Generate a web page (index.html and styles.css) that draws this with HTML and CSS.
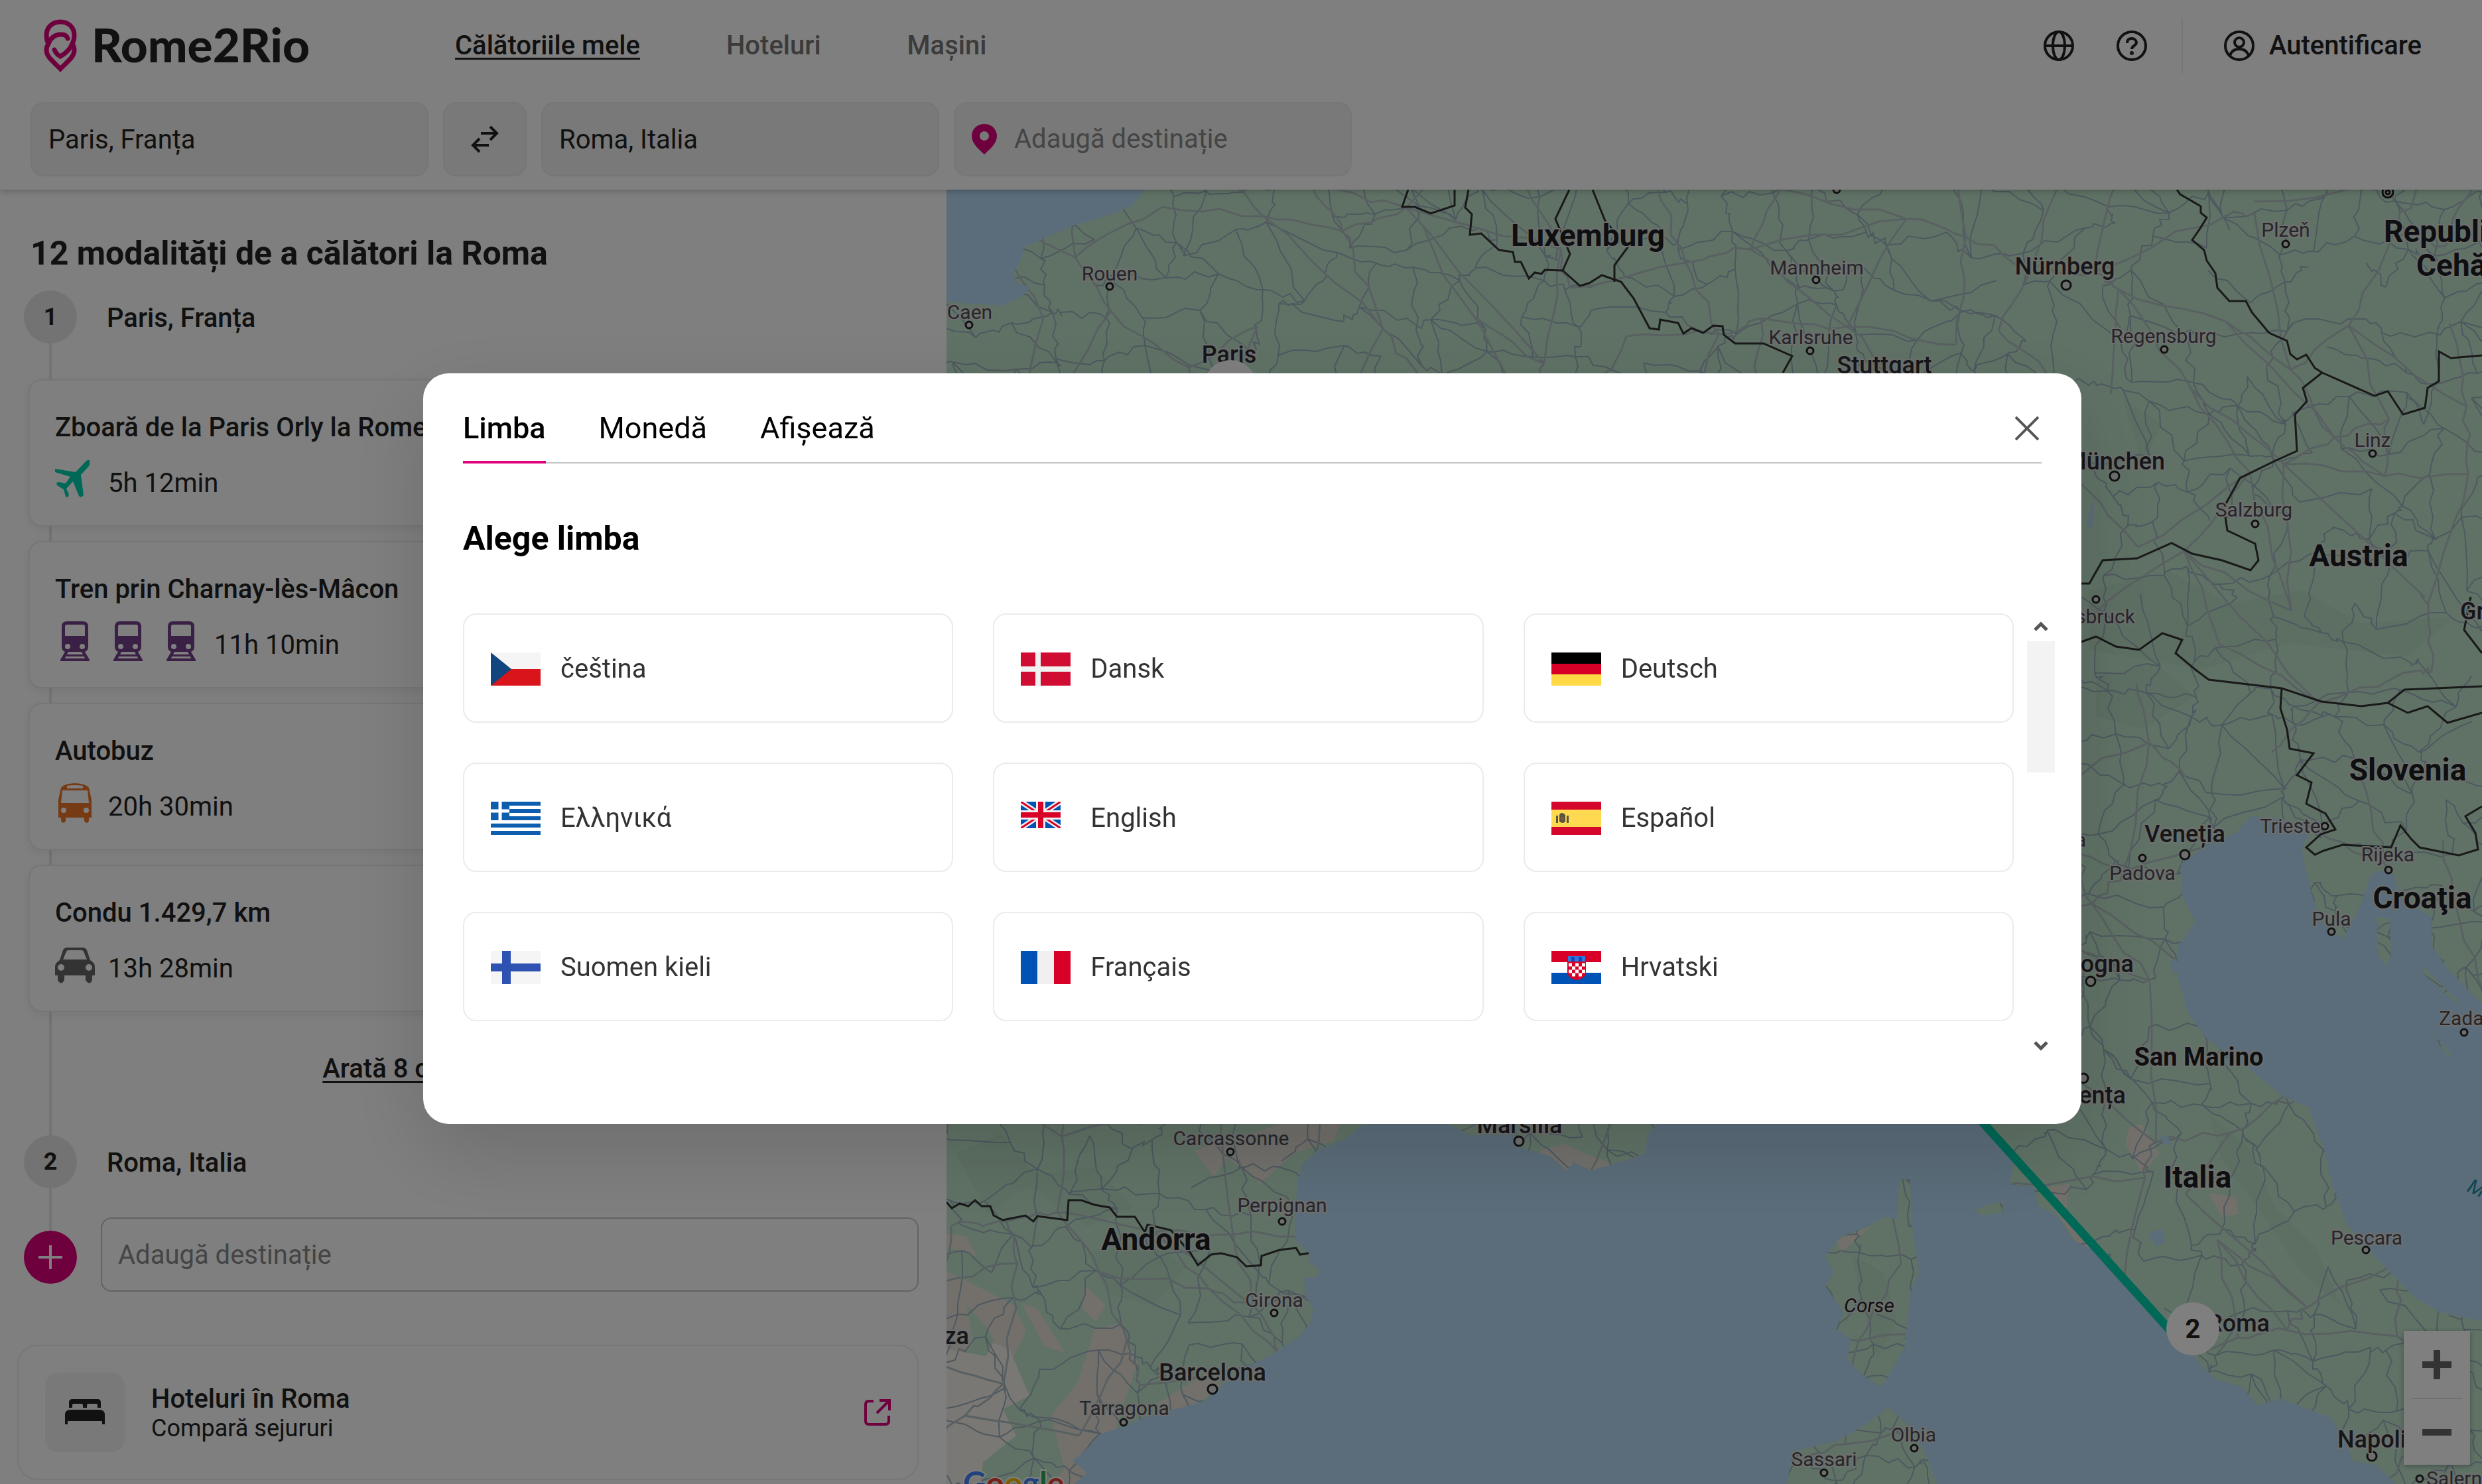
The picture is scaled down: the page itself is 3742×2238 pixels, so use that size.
FILE: index.html
```html
<!DOCTYPE html>
<html lang="ro">
<head>
    <meta charset="UTF-8">
    <meta name="viewport" content="width=device-width, initial-scale=1">
    <title>Paris - Roma | Rome2Rio</title>
    <link rel="stylesheet" href="styles.css">
</head>
<body>
<header class="header">
    <div class="topbar">
        <a class="logo" href="#">
            <svg class="logo-pin" viewBox="0 0 50 80" fill="none" stroke="#df007c" stroke-width="7">
                <path d="M25 4C13 4 4 12 4 24c0 5 1 9 3 13-2 3-3 6-3 10 0 10 11 17 21 28 10-11 21-18 21-28 0-4-1-7-3-10 2-4 3-8 3-13C46 12 37 4 25 4z"/>
                <path d="M7 37c3-9 10-14 19-14 5 0 9 2 10 6" stroke-linecap="round"/>
                <path d="M43 37C39 47 32 52 25 56c-4-2-7-5-9-10" stroke-linecap="round"/>
            </svg>
            <span>Rome2Rio</span>
        </a>
        <nav class="nav">
            <a class="active" href="#">Călătoriile mele</a>
            <a href="#">Hoteluri</a>
            <a href="#">Mașini</a>
        </nav>
        <div class="tools">
            <button class="tool" aria-label="Limba">
                <svg viewBox="0 0 46 46" fill="none" stroke="#222" stroke-width="4"><circle cx="23" cy="23" r="21"/><ellipse cx="23" cy="23" rx="9" ry="21"/><path d="M2 23h42"/></svg>
            </button>
            <button class="tool" aria-label="Ajutor">
                <svg viewBox="0 0 46 46" fill="none" stroke="#222" stroke-width="4"><circle cx="23" cy="23" r="21"/><path d="M16 19c0-5 3-7 7-7s7 3 7 6c0 5-7 5-7 10"/><circle cx="23" cy="34" r="1" fill="#222"/></svg>
            </button>
            <button class="login">
                <svg viewBox="0 0 46 46" fill="none" stroke="#222" stroke-width="4"><circle cx="23" cy="23" r="21"/><circle cx="23" cy="18" r="7"/><path d="M9 38c2-7 7-10 14-10s12 3 14 10"/></svg>
                <span>Autentificare</span>
            </button>
        </div>
    </div>
    <form class="search">
        <input class="field" type="text" value="Paris, Franța" aria-label="Origine">
        <button class="swap" type="button" aria-label="Inversează">
            <svg viewBox="0 0 42 42" fill="none" stroke="#222" stroke-width="4"><path d="M15 12h24M29 2l10 10-10 10M27 30H3M13 20L3 30l10 10"/></svg>
        </button>
        <input class="field" type="text" value="Roma, Italia" aria-label="Destinație">
        <label class="field field-add">
            <svg viewBox="0 0 38 46"><path fill="#df007c" fill-rule="evenodd" d="M19 0C8 0 0 8 0 18c0 12 12 21 19 28 7-7 19-16 19-28C38 8 30 0 19 0zm0 11a7 7 0 1 1 0 14 7 7 0 0 1 0-14z"/></svg>
            <input type="text" placeholder="Adaugă destinație">
        </label>
    </form>
</header>

<main class="main">
    <section class="panel">
        <h1>12 modalități de a călători la Roma</h1>
        <div class="timeline">
            <div class="stop"><span class="dot">1</span><span class="place">Paris, Franța</span></div>
            <div class="routes">
                <a class="route" href="#">
                    <span class="route-title">Zboară de la Paris Orly la Rome Fiumicino</span>
                    <span class="route-row">
                        <svg viewBox="0 0 60 60" fill="#00d0ae"><path d="M0 14l31 5L46 3c3-3 7-3 6 0 1 3 0 5-1 7L39 23l4 31-4 3-3-2-9-22-10 11 4 9-2 4-3-1-3-11-10-6-1-4 4-1 10 2 7-10L0 19z"/></svg>
                        5h 12min
                    </span>
                </a>
                <a class="route" href="#">
                    <span class="route-title">Tren prin Charnay-lès-Mâcon</span>
                    <span class="route-row">
                        <svg viewBox="0 0 60 60"><use href="#train"/></svg>
                        <svg viewBox="0 0 60 60"><use href="#train"/></svg>
                        <svg viewBox="0 0 60 60"><use href="#train"/></svg>
                        11h 10min
                    </span>
                </a>
                <a class="route" href="#">
                    <span class="route-title">Autobuz</span>
                    <span class="route-row">
                        <svg viewBox="0 0 60 60" fill="#ec7428"><path fill-rule="evenodd" d="M9 7c6-9 36-9 42 0l4 18v27h-4v5q-3 6-7 0v-5H16v5q-3 6-7 0v-5H5V25zm9-3v4h24V4q-12-2-24 0zm-7 7L9 30h42l-2-19zm2 26a4 4 0 1 0 0 8 4 4 0 0 0 0-8zm34 0a4 4 0 1 0 0 8 4 4 0 0 0 0-8z"/></svg>
                        20h 30min
                    </span>
                </a>
                <a class="route" href="#">
                    <span class="route-title">Condu 1.429,7 km</span>
                    <span class="route-row">
                        <svg viewBox="0 0 60 60" fill="#666"><path fill-rule="evenodd" d="M7 23l5-15q2-4 6-4h24q4 0 6 4l5 15q7 4 7 10v13h-4v7q-4 9-10 0v-7H14v7q-5 9-10 0v-7H0V33q0-6 7-10zm5-1h36l-5-12q-1-2-3-2H20q-2 0-3 2zm-3 7a5 5 0 1 0 0 10 5 5 0 0 0 0-10zm42 0a5 5 0 1 0 0 10 5 5 0 0 0 0-10z"/></svg>
                        13h 28min
                    </span>
                </a>
            </div>
            <a class="more" href="#">Arată 8 opțiuni adiționale</a>
            <div class="stop"><span class="dot">2</span><span class="place">Roma, Italia</span></div>
            <div class="add">
                <button class="dot dot-add" aria-label="Adaugă">
                    <svg viewBox="0 0 36 36" stroke="#fff" stroke-width="4"><path d="M18 0v36M0 18h36"/></svg>
                </button>
                <input type="text" placeholder="Adaugă destinație" aria-label="Adaugă destinație">
            </div>
        </div>
        <a class="hotel" href="#">
            <span class="hotel-icon">
                <svg viewBox="0 0 60 40" fill="#222"><path d="M6 13V5q0-5 5-5h38q5 0 5 5v8h-5V9q0-2-2-2H35q-2 0-2 3v3h-6v-3q0-3-2-3H13q-2 0-2 2v4zM0 38V24q0-8 8-8h44q8 0 8 8v14h-4v-5H4v5z"/></svg>
            </span>
            <span class="hotel-text">
                <strong>Hoteluri în Roma</strong>
                <span>Compară sejururi</span>
            </span>
            <svg class="external" viewBox="0 0 40 40" fill="none" stroke="#df007c" stroke-width="4"><path d="M14 3H7Q2 3 2 8v25q0 5 5 5h25q5 0 5-5v-8M23 2h15v15M38 2L19 21"/></svg>
        </a>
    </section>

    <section class="map">
        <svg class="map-canvas" viewBox="1427 286 2315 1952" preserveAspectRatio="xMinYMin slice">
            <defs>
                <g id="train" fill="#744088"><path fill-rule="evenodd" d="M18 0h24q8 0 8 8v30q0 6-5 8l7 12v2H8v-2l7-12q-5-2-5-8V8q0-8 8-8zm0 5q-3 0-3 3v14h30V8q0-3-3-3zm1 29a4 4 0 1 0 0 8 4 4 0 0 0 0-8zm22 0a4 4 0 1 0 0 8 4 4 0 0 0 0-8zM20 46l-2 4h24l-2-4zm-4 7l-1 3h30l-1-3z"/></g>
                <path id="land" d="M1726 286L1707 310 1669 325 1616 341 1568 362 1544 372 1540 390 1527 413 1533 427 1554 433 1540 447 1511 461 1468 458 1426 455V2238H1619L1639 2221 1617 2203 1642 2182 1657 2164 1688 2153 1741 2132 1780 2123 1818 2112 1833 2096 1879 2061 1910 2047 1956 2018 1975 1997 1980 1975 1968 1954 1966 1927 1986 1926 1990 1915 1973 1904 1973 1890 1953 1869 1953 1822 1956 1783 1963 1757 1986 1735 2025 1719 2055 1696 2174 1690 2216 1712 2285 1712 2296 1732 2338 1744 2361 1765 2373 1753 2400 1765 2434 1755 2480 1740 2484 1712 2503 1690H2985L3019 1717 3040 1739 3030 1786 3066 1790 3073 1819 3102 1833 3124 1869 3161 1888 3193 1913 3222 1964 3266 2000 3306 2044 3339 2080 3379 2091 3404 2120 3437 2109 3474 2123 3514 2138 3539 2174 3546 2203 3583 2210 3612 2238H3742V1993L3677 1978 3641 1956 3583 1898 3539 1848 3517 1790 3503 1731 3481 1670 3444 1655 3386 1608 3328 1568 3299 1528 3284 1477 3284 1427 3310 1390 3288 1347 3288 1303 3328 1274 3372 1256 3393 1231 3437 1234 3485 1249 3470 1281 3485 1347 3499 1390 3532 1416 3554 1376 3576 1318 3605 1310 3619 1354 3666 1383 3666 1427 3692 1463 3742 1514V286z
                    M2880 1778L2882 1840 2893 1920 2880 1950 2872 2030 2850 2070 2837 2092 2810 2075 2785 2050 2790 2020 2768 2003 2780 1980 2752 1940 2765 1920 2752 1895 2775 1865 2815 1850 2840 1835 2860 1838 2862 1800 2865 1778z
                    M2847 2122L2818 2145 2767 2174 2702 2189 2695 2238H2920L2902 2189 2880 2152z
                    M2975 1826L3000 1816 3020 1813 3019 1830 2990 1832z
                    M3583 1383L3603 1385 3605 1440 3597 1458 3586 1440z M3650 1455L3712 1515 3700 1510 3655 1470z M3660 1550L3700 1595 3690 1592z"/>
                <clipPath id="landClip"><use href="#land"/></clipPath>
            </defs>
            <rect x="1427" y="286" width="2315" height="1952" fill="#b6d9f5"/>
            <use href="#land" fill="#c1e5cc"/>
            <g clip-path="url(#landClip)">
                <g fill="#e6e1d8">
                    <path d="M1427 1917l40 20 60 30 20 40-30 60-25-60-35-40 10 60-40 40zM1427 1860l30 5 15 30-45-15z"/>
                    <path d="M1650 2005l40-10 25 60-30 90-30 110-60 60-50-30 60-70-20-80 40-50zM1540 1965l25 10 40 65-30-10zM1635 1938l32 30-15 25-20-20z"/>
                    <path d="M1800 1735l100-30 60-20 70-10-20 45-60 20-50 45-50-40-20 30z"/>
                    <path d="M2320 1735l40-10 30 15 40 15-30 20h-60zM1740 2120l80-50 20 20-50 40z"/>
                    <path d="M3210 1700l20-5 25 45-25 30-25-45zM3090 1790l30-5-5 40 50 70-30-15-40-60zM3330 1800l40 5 5 25-25 5zM2770 1870l50-20-45 40zM3210 950l30-10 20 15-30 15z"/>
                </g>
                <path fill="#f4f0e8" d="M1427 2035l60 10 10-20 25 10 30 70-40 20 20 40-50 40-10 80-45 20z"/>
                <g fill="#bbdec6">
                    <path d="M1440 1740l70-30 50 60 90-10 60 60-70 30-90-60-60 40zM1640 1890l90-20 60 40-50 60-70-20zM3150 890l120-30 90 50 110-20 90 50 140-10-70 60-180-20-130 40-170-30zM3160 1020l90-20 60 50-80 50-70-20zM3200 600l60 40-30 60zM3330 1680l60 50 40 90 60 60 40 90-60-50-60-90-60-80zM2790 1890l50 30 20 70-30 60-20-80z"/>
                </g>
                <g id="roads" class="roads"></g>
                <g id="highways" class="highways"></g>
            </g>
            <g class="lakes">
                <path d="M3240 1860l20-8 4 22-14 6zM3256 1712l12 2 8 14-14-4zM3270 1450l10-4 10 16-12 8zM3146 790l8-30 4-4-4 44z"/>
            </g>
            <g class="borders">
                <path d="M2123 286L2114 312 2133 312 2157 322 2193 310V286"/>
                <path d="M2214 286L2209 313 2219 323 2216 354 2233 352 2260 377 2281 380 2284 395 2293 395 2305 420 2314 411 2324 413 2329 407 2356 408 2382 431 2396 427 2415 415 2444 425 2463 450 2487 495 2501 497 2503 482 2530 487 2538 503 2550 495 2568 502 2583 491 2597 492 2599 505 2616 518 2659 518 2702 537 2688 562"/>
                <path d="M2366 286L2345 330 2367 383 2356 408M2401 286L2420 333 2454 373 2434 400V425"/>
                <path d="M3282 286L3287 293 3318 311V321L3327 328 3318 343 3305 362 3323 377 3327 393 3340 412 3343 434 3361 454H3386L3395 471 3421 502 3448 514 3453 534 3463 542 3477 535 3490 555 3501 562 3580 597 3600 590 3623 625 3656 615 3660 585 3677 575V530L3695 540 3742 536"/>
                <path d="M3501 562L3472 585 3478 605 3460 625 3463 680 3430 695 3377 721 3353 765 3358 800 3400 820 3405 845 3393 860 3350 845 3305 835 3274 819 3222 842 3170 845 3150 880 3138 880"/>
                <path d="M3138 968L3160 960 3190 975 3225 980 3260 955 3290 965 3280 985 3310 1010 3330 1025 3440 1038 3500 1058 3560 1065 3600 1060 3625 1040 3742 1035"/>
                <path d="M3440 1038L3438 1068 3448 1100 3452 1129 3488 1136 3463 1169 3485 1180 3477 1212 3506 1227 3521 1251 3499 1258 3477 1278 3490 1289 3503 1283 3532 1274 3605 1278 3619 1245 3635 1265 3648 1278 3707 1290 3736 1281 3732 1256 3717 1231 3742 1216"/>
                <path d="M3600 1060L3630 1075 3660 1065 3690 1090 3742 1075M3725 900L3715 950 3742 985"/>
                <path d="M1427 1813L1435 1822 1447 1815 1460 1819 1470 1810 1480 1819 1493 1819 1498 1833 1512 1840 1546 1833 1558 1842 1564 1834 1609 1840 1611 1810 1630 1810 1650 1817 1673 1821 1684 1835H1711L1726 1858 1730 1847 1765 1855 1795 1890 1806 1908 1826 1892 1841 1890 1865 1896 1879 1910 1901 1908 1902 1894 1929 1885 1954 1882 1960 1892 1973 1890"/>
            </g>
            <path d="M2976 1678L3276 2011" stroke="#00d0ac" stroke-width="13"/>
            <g class="towns">
                <circle cx="1673" cy="432" r="5"/><circle cx="1461" cy="490" r="5"/><circle cx="2738" cy="422" r="5"/><circle cx="2729" cy="529" r="5"/>
                <circle cx="3446" cy="368" r="5"/><circle cx="3263" cy="527" r="5"/><circle cx="3577" cy="684" r="5"/><circle cx="3400" cy="790" r="5"/>
                <circle cx="3160" cy="904" r="5"/><circle cx="3505" cy="1246" r="5"/><circle cx="3230" cy="1294" r="5"/><circle cx="3601" cy="1312" r="5"/>
                <circle cx="3515" cy="1405" r="5"/><circle cx="3715" cy="1557" r="5"/><circle cx="3567" cy="1885" r="5"/><circle cx="2886" cy="2184" r="5"/>
                <circle cx="2750" cy="2221" r="5"/><circle cx="3648" cy="2230" r="5"/><circle cx="1855" cy="1737" r="5"/><circle cx="1933" cy="1842" r="5"/>
                <circle cx="1921" cy="1980" r="5"/><circle cx="1694" cy="2145" r="5"/>
                <circle cx="3115" cy="430" r="7"/><circle cx="3188" cy="718" r="7"/><circle cx="3294" cy="1289" r="7"/><circle cx="3152" cy="1480" r="7"/>
                <circle cx="3141" cy="1626" r="7"/><circle cx="3576" cy="2196" r="7"/><circle cx="2290" cy="1721" r="7"/><circle cx="1828" cy="2095" r="7"/>
                <circle cx="3600" cy="290" r="8"/><circle cx="3600" cy="290" r="3"/><circle cx="2769" cy="286" r="5"/>
            </g>
            <g class="labels small">
                <text x="1673" y="423">Rouen</text>
                <text x="1462" y="481">Caen</text>
                <text x="2739" y="414">Mannheim</text>
                <text x="2730" y="519">Karlsruhe</text>
                <text x="3446" y="357">Plzeň</text>
                <text x="3262" y="517">Regensburg</text>
                <text x="3577" y="674">Linz</text>
                <text x="3398" y="779">Salzburg</text>
                <text class="end" x="3219" y="940">Innsbruck</text>
                <text x="3453" y="1256">Trieste</text>
                <text x="3230" y="1327">Padova</text>
                <text x="3600" y="1299">Rijeka</text>
                <text x="3515" y="1396">Pula</text>
                <text class="start" x="3677" y="1546">Zadar</text>
                <text x="3568" y="1877">Pescara</text>
                <text class="island" x="2818" y="1979">Corse</text>
                <text x="2885" y="2174">Olbia</text>
                <text x="2750" y="2211">Sassari</text>
                <text class="start" x="3658" y="2240">Salerno</text>
                <text class="end" x="3145" y="1277">Verona</text>
                <text x="1856" y="1727">Carcassonne</text>
                <text x="1933" y="1828">Perpignan</text>
                <text x="1921" y="1971">Girona</text>
                <text x="1695" y="2134">Tarragona</text>
            </g>
            <g class="labels city">
                <text x="1853" y="547">Paris</text>
                <text x="2841" y="563">Stuttgart</text>
                <text x="3113" y="414">Nürnberg</text>
                <text class="end" x="3264" y="708">München</text>
                <text class="start" x="3709" y="934">Graz</text>
                <text x="3294" y="1270">Veneția</text>
                <text class="end" x="3217" y="1466">Bologna</text>
                <text class="end" x="3205" y="1664">Florența</text>
                <text class="end" x="3422" y="2008">Roma</text>
                <text class="start" x="3524" y="2183">Napoli</text>
                <text x="2291" y="1709">Marsilia</text>
                <text class="end" x="1461" y="2027">Zaragoza</text>
                <text x="1828" y="2082">Barcelona</text>
            </g>
            <g class="labels country">
                <text x="2394" y="371">Luxemburg</text>
                <text class="start" x="3594" y="365">Republica</text>
                <text class="start" x="3643" y="416">Cehă</text>
                <text x="3556" y="854">Austria</text>
                <text x="3630" y="1177">Slovenia</text>
                <text x="3652" y="1370">Croaţia</text>
                <text x="3313" y="1791">Italia</text>
                <text x="1743" y="1885">Andorra</text>
                <text class="minor" x="3315" y="1607">San Marino</text>
            </g>
            <text class="sea" x="3718" y="1796" transform="rotate(25 3718 1796)">Marea Adriatică</text>
            <g class="pins">
                <circle cx="1855" cy="583" r="40"/>
                <circle cx="3306" cy="2004" r="40"/>
                <text x="3306" y="2018">2</text>
            </g>
            <text class="google" x="1452" y="2254"><tspan fill="#4285f4">G</tspan><tspan fill="#ea4335">o</tspan><tspan fill="#fbbc05">o</tspan><tspan fill="#4285f4">g</tspan><tspan fill="#34a853">l</tspan><tspan fill="#ea4335">e</tspan></text>
        </svg>
        <div class="zoom">
            <button aria-label="Mărește"><svg viewBox="0 0 44 44" stroke="#666" stroke-width="10"><path d="M22 0v44M0 22h44"/></svg></button>
            <button aria-label="Micșorează"><svg viewBox="0 0 44 44" stroke="#666" stroke-width="10"><path d="M0 22h44"/></svg></button>
        </div>
    </section>
</main>

<div class="overlay">
    <div class="modal" role="dialog" aria-label="Limba">
        <div class="tabs">
            <button class="tab selected">Limba</button>
            <button class="tab">Monedă</button>
            <button class="tab">Afișează</button>
            <button class="close" aria-label="Închide">
                <svg viewBox="0 0 36 36" stroke="#555" stroke-width="4"><path d="M1 1l34 34M35 1L1 35"/></svg>
            </button>
        </div>
        <h2>Alege limba</h2>
        <div class="languages">
            <div class="grid">
                <button class="language">
                    <svg viewBox="0 0 75 50"><path fill="#f5f5f5" d="M0 0h75v25H0z"/><path fill="#d9141a" d="M0 25h75v25H0z"/><path fill="#11457e" d="M0 0l31 25L0 50z"/></svg>
                    čeština
                </button>
                <button class="language">
                    <svg viewBox="0 0 75 50"><path fill="#d00c33" d="M0 0h75v50H0z"/><path fill="#f0f0f0" d="M22 0h8v50h-8zM0 21h75v8H0z"/></svg>
                    Dansk
                </button>
                <button class="language">
                    <svg viewBox="0 0 75 50"><path d="M0 0h75v17H0z"/><path fill="#d80027" d="M0 17h75v17H0z"/><path fill="#ffda44" d="M0 33h75v17H0z"/></svg>
                    Deutsch
                </button>
                <button class="language">
                    <svg viewBox="0 0 75 50"><path fill="#fff" d="M0 0h75v50H0z"/><path stroke="#0d5eaf" stroke-width="6" d="M0 3h75M0 14h75M0 25h75M0 36h75M0 47h75"/><path fill="#0d5eaf" d="M0 0h28v28H0z"/><path stroke="#fff" stroke-width="5" d="M14 0v28M0 14h28"/></svg>
                    Ελληνικά
                </button>
                <button class="language">
                    <svg viewBox="0 0 75 50"><path fill="#0052b4" d="M0 0h60v40H0z"/><path stroke="#f0f0f0" stroke-width="8" d="M0 0l60 40M60 0L0 40"/><path stroke="#d80027" stroke-width="3" d="M0 0l60 40M60 0L0 40"/><path stroke="#f0f0f0" stroke-width="14" d="M30 0v40M0 20h60"/><path stroke="#d80027" stroke-width="8" d="M30 0v40M0 20h60"/><path fill="#fff" d="M60 0h15v50H0V40h60z"/></svg>
                    English
                </button>
                <button class="language">
                    <svg viewBox="0 0 75 50"><path fill="#d6072c" d="M0 0h75v50H0z"/><path fill="#ffda50" d="M0 12h75v26H0z"/><path fill="#5a5540" d="M7 21h3v11H7zM23 21h3v11h-3zM12 20q1-3 4-3t5 3v10q-4 4-9 0z"/><path fill="#8a5a40" d="M15 23h3v5h-3z"/></svg>
                    Español
                </button>
                <button class="language">
                    <svg viewBox="0 0 75 50"><path fill="#f5f5f5" d="M0 0h75v50H0z"/><path fill="#2e52b2" d="M17 0h13v50H17zM0 19h75v12H0z"/></svg>
                    Suomen kieli
                </button>
                <button class="language">
                    <svg viewBox="0 0 75 50"><path fill="#0052b4" d="M0 0h25v50H0z"/><path fill="#f0f0f0" d="M25 0h25v50H25z"/><path fill="#d80027" d="M50 0h25v50H50z"/></svg>
                    Français
                </button>
                <button class="language">
                    <svg viewBox="0 0 75 50"><path fill="#fff" d="M0 0h75v50H0z"/><path fill="#d80027" d="M0 0h75v17H0z"/><path fill="#0052b4" d="M0 33h75v17H0z"/><path fill="#d80027" d="M24 16h28v18q-2 8-14 10-12-2-14-10z"/><path fill="#2b7be0" d="M25 8h26v8H25z"/><path fill="#1a47b8" d="M30 9h5v7h-5zM41 9h5v7h-5z"/><path stroke="#fff" stroke-width="5" stroke-dasharray="5 5" d="M26 21h25M26 31h25"/><path stroke="#fff" stroke-width="5" stroke-dasharray="5 5" d="M31 26h16M31 36h15"/></svg>
                    Hrvatski
                </button>
            </div>
            <div class="scrollbar">
                <svg viewBox="0 0 22 16"><path d="M2 13l9-9 9 9" fill="none" stroke="#555" stroke-width="5"/></svg>
                <span class="thumb"></span>
                <svg class="down" viewBox="0 0 22 16"><path d="M2 3l9 9 9-9" fill="none" stroke="#555" stroke-width="5"/></svg>
            </div>
        </div>
    </div>
</div>

<script src="script.js"></script>
</body>
</html>
```

FILE: styles.css
```css
* {
    box-sizing: border-box;
}
body {
    margin: 0;
    height: 100vh;
    overflow: hidden;
    display: flex;
    flex-direction: column;
    font-family: Roboto, "Liberation Sans", sans-serif;
    font-size: 40px;
    line-height: 48px;
    color: #222;
    background: #fff;
}
a {
    color: inherit;
    text-decoration: none;
}
button, input {
    font: inherit;
    color: inherit;
}
button {
    padding: 0;
    border: 0;
    background: none;
}
h1, h2 {
    margin: 0;
    font-size: 50px;
    line-height: 60px;
    font-weight: 700;
}
svg {
    display: block;
}
::placeholder {
    color: #8a8a8a;
    opacity: 1;
}

/* header */
.header {
    position: relative;
    z-index: 1;
    background: #fff;
    padding-bottom: 20px;
    box-shadow: 0 2px 10px rgba(0, 0, 0, .25);
}
.topbar {
    display: flex;
    align-items: center;
    height: 138px;
    padding: 0 91px 0 66px;
}
.logo {
    display: flex;
    align-items: center;
    gap: 22px;
    width: 620px;
    font-family: Lato, sans-serif;
    font-size: 71px;
    line-height: 80px;
    font-weight: 900;
}
.logo span {
    padding-bottom: 4px;
}
.logo-pin {
    width: 50px;
    height: 80px;
}
.nav {
    display: flex;
    gap: 130px;
    font-weight: 500;
    color: #777;
}
.nav .active {
    color: #222;
    text-decoration: underline;
    text-decoration-thickness: 3px;
    text-underline-offset: 5px;
}
.tools {
    display: flex;
    align-items: center;
    gap: 64px;
    margin-left: auto;
}
.tools svg {
    width: 46px;
    height: 46px;
}
.login {
    display: flex;
    align-items: center;
    gap: 22px;
    height: 84px;
    margin-left: -12px;
    padding-left: 62px;
    border-left: 2px solid #ececec;
    font-weight: 500;
}
.search {
    display: flex;
    gap: 22px;
    padding: 0 46px;
    margin-top: 16px;
}
.field, .swap {
    height: 112px;
    border: 2px solid #ececec;
    border-radius: 20px;
    background: #f2f2f2;
}
.field {
    flex: 0 1 600px;
    min-width: 0;
    padding: 0 25px;
}
.field-add {
    display: flex;
    align-items: center;
    gap: 26px;
}
.field-add svg {
    width: 38px;
    height: 46px;
}
.field-add input {
    min-width: 0;
    flex: 1;
    padding: 0;
    border: 0;
    background: none;
}
.swap {
    display: grid;
    place-items: center;
    flex: 0 0 126px;
}
.swap svg {
    width: 42px;
    height: 42px;
}

/* routes */
.main {
    flex: 1;
    min-height: 0;
    display: flex;
}
.panel {
    flex: 0 1 1427px;
    padding: 66px 42px 0 26px;
}
.panel h1 {
    padding-left: 20px;
}
.timeline {
    position: relative;
    display: flex;
    flex-direction: column;
    margin-top: 26px;
    padding-left: 10px;
}
.timeline::before {
    content: "";
    position: absolute;
    left: 48px;
    top: 40px;
    bottom: 40px;
    width: 4px;
    background: #e6e6e6;
}
.stop {
    position: relative;
    display: flex;
    align-items: center;
    gap: 45px;
    font-weight: 500;
}
.place {
    padding-top: 4px;
}
.dot {
    display: grid;
    place-items: center;
    flex: none;
    width: 80px;
    height: 80px;
    border-radius: 50%;
    background: #e6e6e6;
    font-size: 36px;
    font-weight: 700;
}
.dot-add {
    position: relative;
    margin-top: 8px;
    background: #df007c;
}
.dot-add svg {
    width: 36px;
    height: 36px;
}
.routes {
    position: relative;
    display: grid;
    gap: 22px;
    margin: 54px 0 62px 7px;
}
.route {
    display: flex;
    flex-direction: column;
    gap: 25px;
    height: 222px;
    padding: 47px 38px 0;
    border: 2px solid #ececec;
    border-radius: 20px;
    background: #fff;
    box-shadow: 0 4px 16px rgba(0, 0, 0, .08);
}
.route-title {
    font-weight: 500;
}
.route-row {
    display: flex;
    align-items: flex-end;
    gap: 20px;
    height: 59px;
}
.route-row svg {
    width: 60px;
    height: 60px;
}
.more {
    align-self: center;
    margin-bottom: 76px;
    font-weight: 500;
    text-decoration: underline;
    text-decoration-thickness: 3px;
    text-underline-offset: 5px;
}
.add {
    display: flex;
    align-items: center;
    gap: 36px;
    margin-top: 44px;
}
.add input {
    flex: 1;
    min-width: 0;
    height: 112px;
    padding: 0 24px;
    border: 2px solid #c4c4c4;
    border-radius: 16px;
    background: #fff;
}
.hotel {
    display: flex;
    align-items: center;
    gap: 40px;
    height: 204px;
    margin-top: 80px;
    padding: 0 40px;
    border: 2px solid #ececec;
    border-radius: 30px;
}
.hotel-icon {
    display: grid;
    place-items: center;
    width: 120px;
    height: 120px;
    border-radius: 20px;
    background: #f2f2f2;
}
.hotel-icon svg {
    width: 60px;
    height: 40px;
}
.hotel-text {
    flex: 1;
    display: flex;
    flex-direction: column;
    padding-top: 4px;
    font-size: 36px;
    line-height: 44px;
}
.hotel-text strong {
    font-size: 40px;
    font-weight: 500;
}
.external {
    width: 40px;
    height: 40px;
}

/* map */
.map {
    position: relative;
    flex: 1;
    min-width: 0;
    background: #b6d9f5;
    overflow: hidden;
}
.map-canvas {
    width: 100%;
    height: 100%;
}
.roads {
    fill: none;
    stroke: #9cb0bf;
    stroke-width: 2;
}
.highways {
    fill: none;
    stroke: #b2c0c4;
    stroke-width: 3;
}
.lakes {
    fill: #b6d9f5;
}
.borders {
    fill: none;
    stroke: #333;
    stroke-width: 3;
}
.towns {
    fill: #ddd;
    stroke: #222;
    stroke-width: 3;
}
.labels {
    fill: #2c2e33;
    stroke: #dcdedd;
    stroke-width: 4;
    stroke-linejoin: round;
    paint-order: stroke;
    text-anchor: middle;
}
.labels .start {
    text-anchor: start;
}
.labels .end {
    text-anchor: end;
}
.small {
    font-size: 30px;
    fill: #4c4c52;
}
.city {
    font-size: 36px;
    font-weight: 500;
}
.country {
    font-size: 46px;
    font-weight: 700;
    fill: #1c1e22;
}
.country .minor {
    font-size: 38px;
}
.island {
    font-style: italic;
    fill: #222;
}
.sea {
    font-size: 30px;
    font-style: italic;
    fill: #1c8aa0;
}
.pins {
    fill: #fff;
}
.pins text {
    font-size: 40px;
    font-weight: 700;
    fill: #222;
    text-anchor: middle;
}
.google {
    font-family: Lato, sans-serif;
    font-size: 48px;
    font-weight: 700;
    stroke: #fff;
    stroke-width: 4;
    paint-order: stroke;
}
.zoom {
    position: absolute;
    right: 18px;
    bottom: 29px;
    width: 100px;
    background: #fff;
    box-shadow: 0 2px 8px rgba(0, 0, 0, .3);
}
.zoom button {
    display: grid;
    place-items: center;
    width: 76px;
    height: 101px;
    margin: 0 12px;
}
.zoom button + button {
    border-top: 2px solid #e0e0e0;
}
.zoom svg {
    width: 44px;
    height: 44px;
}

/* language dialog */
.overlay {
    position: fixed;
    inset: 0;
    z-index: 2;
    display: grid;
    place-items: center;
    padding: 20px 0 0 34px;
    background: rgba(0, 0, 0, .5);
}
.modal {
    width: 2500px;
    max-width: 100%;
    padding: 0 40px 98px 60px;
    border-radius: 38px;
    background: #fff;
    color: #000;
    box-shadow: 0 40px 120px rgba(0, 0, 0, .15);
}
.tabs {
    display: flex;
    gap: 80px;
    height: 136px;
    margin-right: 20px;
    border-bottom: 2px solid #c4c6c6;
    font-size: 45px;
}
.tab {
    height: 136px;
    padding-top: 34px;
    border-bottom: 4px solid transparent;
}
.tab.selected {
    border-color: #df007c;
    font-weight: 500;
}
.close {
    margin-left: auto;
    padding: 32px 4px 0;
}
.close svg {
    width: 36px;
    height: 36px;
}
.modal h2 {
    margin: 83px 0 81px;
}
.languages {
    display: flex;
    gap: 20px;
}
.grid {
    flex: 1;
    display: grid;
    grid-template-columns: repeat(3, 1fr);
    grid-auto-rows: 165px;
    gap: 60px;
    padding-top: 2px;
}
.language {
    display: flex;
    align-items: center;
    gap: 30px;
    padding: 2px 40px 0;
    border: 2px solid #ebebeb;
    border-radius: 20px;
    color: #333;
}
.language svg {
    width: 75px;
    height: 50px;
}
.scrollbar {
    display: flex;
    flex-direction: column;
    align-items: center;
    width: 42px;
    height: 674px;
    padding: 14px 0 12px;
}
.scrollbar svg {
    width: 22px;
    height: 16px;
}
.thumb {
    width: 42px;
    height: 198px;
    margin-top: 14px;
    background: #f3f3f3;
}
.scrollbar .down {
    margin-top: auto;
}
```

FILE: script.js
```js
// draws the road mesh under the map labels, always the same one
let seed = 42;

function rand() {
    seed = (seed * 16807) % 2147483647;
    return seed / 2147483647;
}

function drawMesh(id, cell, keep) {
    const nodes = [];
    for (let y = 240; y < 2300; y += cell) {
        const row = [];
        for (let x = 1380; x < 3800; x += cell) {
            row.push([x + (rand() - 0.5) * cell, y + (rand() - 0.5) * cell]);
        }
        nodes.push(row);
    }

    function link(a, b) {
        if (!b || rand() > keep) return '';
        let d = `M${a[0].toFixed(0)} ${a[1].toFixed(0)}`;
        for (let i = 1; i < 5; i++) {
            const x = a[0] + (b[0] - a[0]) * i / 5 + (rand() - 0.5) * 12;
            const y = a[1] + (b[1] - a[1]) * i / 5 + (rand() - 0.5) * 12;
            d += `L${x.toFixed(0)} ${y.toFixed(0)}`;
        }
        return d + `L${b[0].toFixed(0)} ${b[1].toFixed(0)}`;
    }

    let d = '';
    nodes.forEach((row, r) => row.forEach((node, c) => {
        const below = nodes[r + 1] || [];
        d += link(node, row[c + 1]) + link(node, below[c]);
        if (rand() < 0.3) d += link(node, below[c + 1]);
    }));

    const path = document.createElementNS('http://www.w3.org/2000/svg', 'path');
    path.setAttribute('d', d);
    document.getElementById(id).appendChild(path);
}

drawMesh('highways', 130, 0.6);
drawMesh('roads', 62, 0.72);
```
